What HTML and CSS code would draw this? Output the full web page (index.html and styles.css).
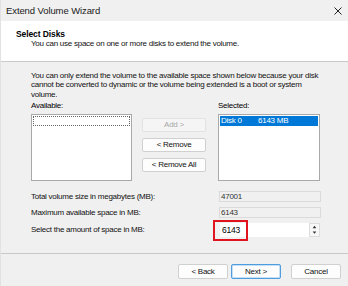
FILE: index.html
```html
<!DOCTYPE html>
<html>
<head>
<meta charset="utf-8">
<link rel="stylesheet" href="styles.css">
</head>
<body>
<div class="window">
  <div class="titlebar">
    <span class="title">Extend Volume Wizard</span>
    <svg class="close" width="8" height="8" viewBox="0 0 8 8"><path d="M0.5 0.5L7.5 7.5M7.5 0.5L0.5 7.5" stroke="#222" stroke-width="1" fill="none"/></svg>
  </div>
  <div class="header">
    <div class="h-title">Select Disks</div>
    <div class="h-sub">You can use space on one or more disks to extend the volume.</div>
  </div>
  <div class="body">
    <p class="intro">You can only extend the volume to the available space shown below because your disk<br>cannot be converted to dynamic or the volume being extended is a boot or system<br>volume.</p>
    <div class="disks">
      <div class="col col-avail">
        <div class="lbl">Available:</div>
        <div class="listbox"><div class="focusrow"></div></div>
      </div>
      <div class="btns">
        <div class="btn disabled">Add &gt;</div>
        <div class="btn">&lt; Remove</div>
        <div class="btn">&lt; Remove All</div>
      </div>
      <div class="col col-sel">
        <div class="lbl">Selected:</div>
        <div class="listbox"><div class="selrow"><span class="disk">Disk 0</span><span>6143 MB</span></div></div>
      </div>
    </div>
    <div class="fields">
      <div class="row r1"><span class="flbl">Total volume size in megabytes (MB):</span><div class="ro">47001</div></div>
      <div class="row r2"><span class="flbl">Maximum available space in MB:</span><div class="ro">6143</div></div>
      <div class="row r3"><span class="flbl">Select the amount of space in MB:</span>
        <div class="spin">
          <div class="spin-input"><span class="val">6143</span></div>
          <div class="arrows">
            <svg width="9" height="6" viewBox="0 0 9 6"><path d="M2.5 4.5L4.5 2L6.5 4.5Z" fill="#333"/></svg>
            <svg width="9" height="6" viewBox="0 0 9 6"><path d="M2.5 1.5L4.5 4L6.5 1.5Z" fill="#333"/></svg>
          </div>
          <div class="highlight"></div>
        </div>
      </div>
    </div>
  </div>
  <div class="footer">
    <div class="fbtn">&lt; Back</div>
    <div class="fbtn default">Next &gt;</div>
    <div class="fbtn cancel">Cancel</div>
  </div>
</div>
</body>
</html>
```

FILE: styles.css
```css
html, body {
  margin: 0;
  padding: 0;
  background: #f0f0f0;
}
.window {
  width: 348px;
  height: 286px;
  display: flex;
  flex-direction: column;
  background: #f0f0f0;
  font-family: "Liberation Sans", Arial, sans-serif;
  font-size: 8px;
  letter-spacing: -0.25px;
  color: #000;
  overflow: hidden;
  border-left: 1px solid #e2e2e2;
  box-sizing: border-box;
}
.titlebar {
  height: 21px;
  display: flex;
  align-items: center;
  justify-content: space-between;
  padding: 0 6px 0 5px;
  background: #f0f0f0;
  flex: none;
}
.title {
  font-size: 9.5px;
  letter-spacing: -0.1px;
  color: #1a1a1a;
}
.close {
  margin-top: 1px;
}
.header {
  height: 41px;
  background: #fff;
  border-bottom: 1px solid #c9c9c9;
  box-sizing: border-box;
  padding: 8px 0 0 15px;
  flex: none;
}
.h-title {
  font-weight: bold;
  font-size: 8.5px;
  letter-spacing: -0.1px;
  line-height: 10px;
}
.h-sub {
  margin-left: 15px;
  line-height: 10px;
  color: #111;
}
.body {
  flex: 1;
  padding: 9px 0 0 30px;
}
.intro {
  margin: 0;
  line-height: 9.3px;
  color: #111;
}
.disks {
  display: flex;
  margin-top: 2px;
}
.lbl {
  line-height: 10px;
  height: 10px;
  margin-bottom: 3px;
}
.listbox {
  width: 101px;
  height: 67px;
  background: #fff;
  border: 1px solid #a9a9a9;
  box-sizing: border-box;
  padding: 1px;
}
.col-sel .listbox {
  width: 102px;
}
.focusrow {
  height: 10px;
  border: 1px dotted #666;
  box-sizing: border-box;
}
.selrow {
  height: 10px;
  background: #0078d7;
  color: #fff;
  display: flex;
  align-items: center;
  padding-left: 1px;
  line-height: 10px;
}
.disk {
  width: 37px;
}
.btns {
  display: flex;
  flex-direction: column;
  gap: 6px;
  margin: 17px 12px 0 10px;
}
.btn {
  width: 64px;
  height: 14px;
  box-sizing: border-box;
  border: 1px solid #d0d0d0;
  border-radius: 2px;
  background: #fdfdfd;
  display: flex;
  align-items: center;
  justify-content: center;
  color: #111;
}
.btn.disabled {
  color: #a8a8a8;
  background: #f5f5f5;
  border-color: #e2e2e2;
}
.fields {
  margin-top: 10px;
  display: flex;
  flex-direction: column;
}
.row {
  display: flex;
  align-items: center;
  justify-content: space-between;
  width: 290px;
}
.r1 { height: 12px; }
.r2 { height: 11px; margin-top: 4px; }
.r3 { height: 16px; margin-top: 4px; }
.flbl {
  color: #111;
}
.ro {
  width: 102px;
  height: 11px;
  box-sizing: border-box;
  border: 1px solid #dadada;
  background: #f0f0f0;
  color: #333;
  line-height: 9px;
  padding-left: 1px;
}
.spin {
  position: relative;
  width: 102px;
  height: 16px;
  display: flex;
  background: #fff;
  box-sizing: border-box;
  border: 1px solid #f0f0f0;
}
.spin-input {
  flex: 1;
  display: flex;
  align-items: center;
  padding-left: 2px;
  font-size: 8.5px;
}
.arrows {
  width: 11px;
  display: flex;
  flex-direction: column;
  align-items: center;
  justify-content: center;
  gap: 1px;
  border: 1px solid #dcdcdc;
  background: #f7f7f7;
  box-sizing: border-box;
}
.arrows svg {
  display: block;
}
.highlight {
  position: absolute;
  left: -7px;
  top: -3px;
  width: 35px;
  height: 21px;
  border: 2px solid #e0141e;
  box-sizing: border-box;
}
.footer {
  height: 33px;
  border-top: 1px solid #c9c9c9;
  flex: none;
  box-sizing: border-box;
  display: flex;
  align-items: flex-start;
  padding: 10px 0 0 177px;
}
.fbtn {
  width: 50px;
  height: 15px;
  box-sizing: border-box;
  border: 1px solid #d0d0d0;
  border-radius: 2px;
  background: #fdfdfd;
  display: flex;
  align-items: center;
  justify-content: center;
  color: #111;
}
.fbtn.default {
  margin-left: 3px;
  border: 1px solid #4d9de0;
  box-shadow: inset 0 0 0 0.5px #8fc3ee;
}
.fbtn.cancel {
  margin-left: 10px;
}
```
